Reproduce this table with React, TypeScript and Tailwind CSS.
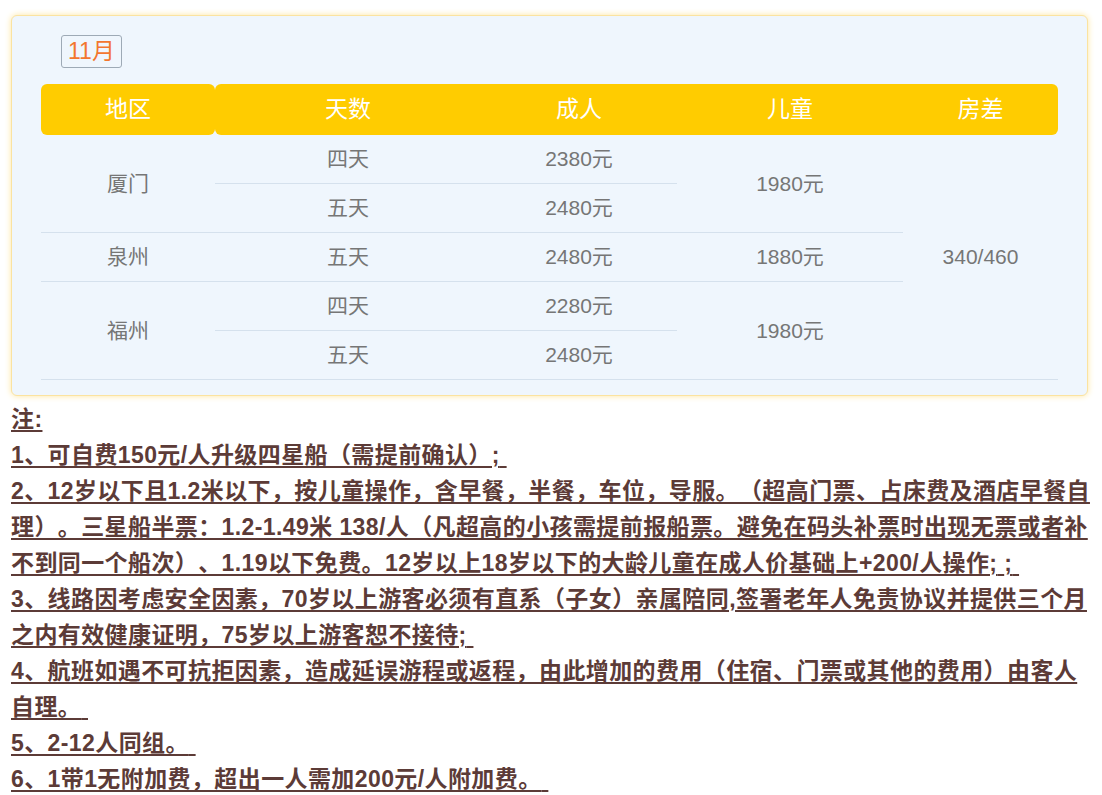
import React from 'react';

const bodyFont = { fontFamily: '"Liberation Sans", "Noto Sans CJK SC", sans-serif' };

type Cell = { text: string; cls: string };

// price table body, placed on a 5-row grid (rowspans as in the original table)
const cells: Cell[] = [
  { text: '厦门', cls: 'col-start-1 row-start-1 row-span-2' },
  { text: '泉州', cls: 'col-start-1 row-start-3' },
  { text: '福州', cls: 'col-start-1 row-start-4 row-span-2' },
  { text: '四天', cls: 'col-start-2 row-start-1' },
  { text: '五天', cls: 'col-start-2 row-start-2' },
  { text: '五天', cls: 'col-start-2 row-start-3' },
  { text: '四天', cls: 'col-start-2 row-start-4' },
  { text: '五天', cls: 'col-start-2 row-start-5' },
  { text: '2380元', cls: 'col-start-3 row-start-1' },
  { text: '2480元', cls: 'col-start-3 row-start-2' },
  { text: '2480元', cls: 'col-start-3 row-start-3' },
  { text: '2280元', cls: 'col-start-3 row-start-4' },
  { text: '2480元', cls: 'col-start-3 row-start-5' },
  { text: '1980元', cls: 'col-start-4 row-start-1 row-span-2' },
  { text: '1880元', cls: 'col-start-4 row-start-3' },
  { text: '1980元', cls: 'col-start-4 row-start-4 row-span-2' },
  { text: '340/460', cls: 'col-start-5 row-start-1 row-span-5' },
];

const App: React.FC = () => {
  return (
    <div className="min-h-screen bg-white pl-[11px] pr-[14px] pt-[15px]" style={bodyFont}>
      {/* Price card */}
      <div className="rounded-[6px] border border-[#fbe3a0] bg-[#eff6fd] px-[29px] pt-[19px] pb-[15px] shadow-[0_0_6px_#fde6a0]">
        <div className="pl-[20px]">
          <span className="inline-flex h-[33px] items-center rounded-[3px] border border-[#9eaab6] px-[6px] text-[23px] text-[#f3762f]">
            11月
          </span>
        </div>

        {/* Header */}
        <div className="mt-[16px] flex h-[51px] text-[23px] text-white">
          <div className="flex w-[174px] items-center justify-center rounded-[6px] bg-[#ffcc00]">地区</div>
          <div className="grid flex-1 grid-cols-[266px_196px_226px_155px] items-center rounded-[6px] bg-[#ffcc00] text-center">
            <span>天数</span>
            <span>成人</span>
            <span>儿童</span>
            <span>房差</span>
          </div>
        </div>

        {/* Body */}
        <div className="grid grid-cols-[174px_266px_196px_226px_155px] grid-rows-[repeat(5,49px)] text-[21px] text-[#767676]">
          {cells.map((c, i) => (
            <div key={i} className={`flex items-center justify-center border-b border-[#d5e1ed] ${c.cls}`}>
              {c.text}
            </div>
          ))}
        </div>
      </div>

      {/* Notes */}
      <div className="-mr-[14px] mt-[5px] text-[23px] font-bold leading-[36px] tracking-[0.4px] text-[#5c3b37] [text-spacing-trim:space-all] [&_p]:underline [&_p]:decoration-2 [&_p]:underline-offset-[3px]">
        <p>注:</p>
        <p>1、可自费150元/人升级四星船（需提前确认）;{'\u00a0'}</p>
        <p>
          2、12岁以下且1.2米以下，按儿童操作，含早餐，半餐，车位，导服。（超高门票、占床费及酒店早餐自
          <br />
          理）。三星船半票：1.2-1.49米 138/人（凡超高的小孩需提前报船票。避免在码头补票时出现无票或者补
          <br />
          不到同一个船次）、1.19以下免费。12岁以上18岁以下的大龄儿童在成人价基础上+200/人操作;{'\u00a0'};{'\u00a0'}
        </p>
        <p>
          3、线路因考虑安全因素，70岁以上游客必须有直系（子女）亲属陪同,签署老年人免责协议并提供三个月
          <br />
          之内有效健康证明，75岁以上游客恕不接待;{'\u00a0'}
        </p>
        <p>
          4、航班如遇不可抗拒因素，造成延误游程或返程，由此增加的费用（住宿、门票或其他的费用）由客人
          <br />
          自理。{'\u00a0'}
        </p>
        <p>5、2-12人同组。{'\u00a0'}</p>
        <p>6、1带1无附加费，超出一人需加200元/人附加费。{'\u00a0'}</p>
      </div>
    </div>
  );
};

export default App;
